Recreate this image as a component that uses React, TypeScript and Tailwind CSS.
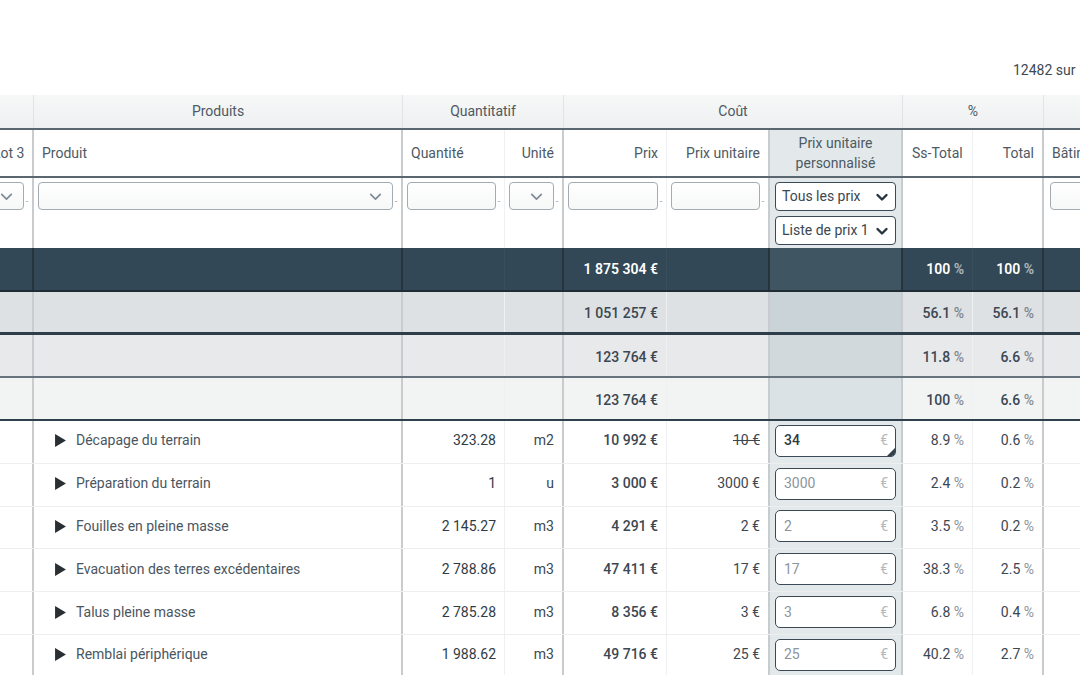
import React from 'react';

const GRID = 'grid grid-cols-[49px_369px_102px_59px_103px_103px_133px_70px_71px_140px]';

// right border per column: group edges are gray, inner ones faint
const vb = [
  'border-r-2 border-r-[#c8ccce]',
  'border-r-2 border-r-[#c8ccce]',
  'border-r border-r-[#eef0f1]',
  'border-r-2 border-r-[#c8ccce]',
  'border-r border-r-[#eef0f1]',
  'border-r-2 border-r-[#c8ccce]',
  'border-r-2 border-r-[#c8ccce]',
  'border-r border-r-[#eef0f1]',
  'border-r-2 border-r-[#c8ccce]',
  '',
];

const vbDark = [
  'border-r-2 border-r-[#26343e]',
  'border-r-2 border-r-[#26343e]',
  'border-r border-r-[#3a4f5c]',
  'border-r-2 border-r-[#26343e]',
  'border-r border-r-[#3a4f5c]',
  'border-r-2 border-r-[#26343e]',
  'border-r-2 border-r-[#26343e]',
  'border-r border-r-[#3a4f5c]',
  'border-r-2 border-r-[#26343e]',
  '',
];

function Chevron({ className }: { className?: string }) {
  return (
    <svg viewBox="0 0 16 16" className={className} fill="none" stroke="currentColor" strokeLinecap="round" strokeLinejoin="round">
      <path d="M3.5 6l4.5 4.5L12.5 6" />
    </svg>
  );
}

function Dots() {
  return <span className="text-[#7a858d] text-[9px] leading-none tracking-[-1px] self-center pt-[6px]">..</span>;
}

function FilterInput({ select }: { select?: boolean }) {
  return (
    <div className="flex items-start gap-[1px] px-[4px] pt-[4px]">
      <div className="flex-1 h-[28px] rounded-[4px] border border-[#a3acb2] bg-gradient-to-b from-white to-[#f6f7f7] flex items-center justify-end pr-[8px]">
        {select && <Chevron className="w-[17px] h-[17px] text-[#7f8a92] stroke-[1.6]" />}
      </div>
      <Dots />
    </div>
  );
}

function Pct({ v, className }: { v: string; className?: string }) {
  return (
    <span className={className}>
      {v}
      <span className="opacity-60"> %</span>
    </span>
  );
}

type Sum = { prix: string; ss: string; tot: string; bg: string; custom: string; border: string; text: string };

const sums: Sum[] = [
  { prix: '1 051 257 €', ss: '56.1', tot: '56.1', bg: 'bg-[#dde1e4]', custom: 'bg-[#c9d3d8]', border: 'border-b-[3px] border-b-[#2d3e4a]', text: 'font-medium' },
  { prix: '123 764 €', ss: '11.8', tot: '6.6', bg: 'bg-[#e7e9eb]', custom: 'bg-[#d1d9dd]', border: 'border-b-2 border-b-[#66737c]', text: 'font-medium' },
  { prix: '123 764 €', ss: '100', tot: '6.6', bg: 'bg-[#f2f4f4]', custom: 'bg-[#dbe2e5]', border: 'border-b-2 border-b-[#2f404c]', text: 'font-medium' },
];

const items = [
  { name: 'Décapage du terrain', q: '323.28', u: 'm2', prix: '10 992 €', pu: '10 €', custom: '34', ss: '8.9', tot: '0.6', active: true },
  { name: 'Préparation du terrain', q: '1', u: 'u', prix: '3 000 €', pu: '3000 €', custom: '3000', ss: '2.4', tot: '0.2' },
  { name: 'Fouilles en pleine masse', q: '2 145.27', u: 'm3', prix: '4 291 €', pu: '2 €', custom: '2', ss: '3.5', tot: '0.2' },
  { name: 'Evacuation des terres excédentaires', q: '2 788.86', u: 'm3', prix: '47 411 €', pu: '17 €', custom: '17', ss: '38.3', tot: '2.5' },
  { name: 'Talus pleine masse', q: '2 785.28', u: 'm3', prix: '8 356 €', pu: '3 €', custom: '3', ss: '6.8', tot: '0.4' },
  { name: 'Remblai périphérique', q: '1 988.62', u: 'm3', prix: '49 716 €', pu: '25 €', custom: '25', ss: '40.2', tot: '2.7' },
];

export default function App() {
  return (
    <div className="w-[1080px] h-[675px] overflow-hidden bg-white text-[14px] text-[#3b4752] whitespace-nowrap font-['Roboto','Liberation_Sans',sans-serif]">
      {/* toolbar */}
      <div className="h-[95px] flex items-end pb-[14px] pl-[1013px] text-[#3d4852]">
        12482 sur 12482 lignes
      </div>

      <div className="-ml-[15px] w-[1230px]">
        {/* group header */}
        <div className={`${GRID} h-[35px] bg-gradient-to-b from-[#f6f7f7] to-[#eff0f1] border-b-2 border-b-[#5b6770] text-[#4d5963]`}>
          <div className="border-r border-r-[#e1e4e6]" />
          <div className="flex items-center justify-center border-r border-r-[#e1e4e6]">Produits</div>
          <div className="col-span-2 flex items-center justify-center border-r border-r-[#e1e4e6]">Quantitatif</div>
          <div className="col-span-3 flex items-center justify-center border-r border-r-[#e1e4e6]">Coût</div>
          <div className="col-span-2 flex items-center justify-center border-r border-r-[#e1e4e6]">%</div>
          <div />
        </div>

        {/* column header */}
        <div className={`${GRID} h-[48px] border-b-2 border-b-[#5b6770] text-[#4d5963]`}>
          <div className={`${vb[0]} flex items-center pl-[8px]`}>Lot 3</div>
          <div className={`${vb[1]} flex items-center pl-[8px]`}>Produit</div>
          <div className={`${vb[2]} flex items-center pl-[8px]`}>Quantité</div>
          <div className={`${vb[3]} flex items-center justify-end pr-[8px]`}>Unité</div>
          <div className={`${vb[4]} flex items-center justify-end pr-[8px]`}>Prix</div>
          <div className={`${vb[5]} flex items-center justify-end pr-[8px]`}>Prix unitaire</div>
          <div className={`${vb[6]} bg-[#e3e9eb] flex items-center justify-center text-center leading-[20px]`}>
            Prix unitaire
            <br />
            personnalisé
          </div>
          <div className={`${vb[7]} flex items-center pl-[9px]`}>Ss-Total</div>
          <div className={`${vb[8]} flex items-center justify-end pr-[8px]`}>Total</div>
          <div className="flex items-center pl-[8px]">Bâtiment</div>
        </div>

        {/* filters */}
        <div className={`${GRID} h-[70px]`}>
          <div className={vb[0]}><FilterInput select /></div>
          <div className={vb[1]}><FilterInput select /></div>
          <div className={vb[2]}><FilterInput /></div>
          <div className={vb[3]}><FilterInput select /></div>
          <div className={vb[4]}><FilterInput /></div>
          <div className={vb[5]}><FilterInput /></div>
          <div className={`${vb[6]} bg-[#e3e9eb] flex flex-col gap-[5px] px-[5px] pt-[4px]`}>
            {['Tous les prix', 'Liste de prix 1'].map((t) => (
              <div key={t} className="h-[29px] rounded-[4px] border border-[#3b4a56] bg-white flex items-center justify-between pl-[6px] pr-[5px] text-[#3b4752]">
                <span>{t}</span>
                <Chevron className="w-[16px] h-[16px] text-[#26343e] stroke-[2.4]" />
              </div>
            ))}
          </div>
          <div className={vb[7]} />
          <div className={vb[8]} />
          <div className="px-[6px] pt-[4px]">
            <div className="h-[28px] rounded-[4px] border border-[#a3acb2] bg-gradient-to-b from-white to-[#f6f7f7]" />
          </div>
        </div>

        {/* grand total */}
        <div className={`${GRID} h-[44px] bg-[#334856] border-b-2 border-b-[#1f2c35] text-white font-semibold`}>
          <div className={vbDark[0]} />
          <div className={vbDark[1]} />
          <div className={vbDark[2]} />
          <div className={vbDark[3]} />
          <div className={`${vbDark[4]} flex items-center justify-end pr-[8px]`}>1 875 304 €</div>
          <div className={vbDark[5]} />
          <div className={`${vbDark[6]} bg-[#3f5562]`} />
          <div className={`${vbDark[7]} flex items-center justify-end pr-[8px]`}><Pct v="100" /></div>
          <div className={`${vbDark[8]} flex items-center justify-end pr-[8px]`}><Pct v="100" /></div>
          <div />
        </div>

        {/* subtotals */}
        {sums.map((s, i) => (
          <div key={i} className={`${GRID} h-[43px] ${s.bg} ${s.border} ${s.text}`}>
            <div className={vb[0]} />
            <div className={vb[1]} />
            <div className={vb[2]} />
            <div className={vb[3]} />
            <div className={`${vb[4]} flex items-center justify-end pr-[8px] pt-[3px]`}>{s.prix}</div>
            <div className={vb[5]} />
            <div className={`${vb[6]} ${s.custom}`} />
            <div className={`${vb[7]} flex items-center justify-end pr-[8px] pt-[3px]`}><Pct v={s.ss} /></div>
            <div className={`${vb[8]} flex items-center justify-end pr-[8px] pt-[3px]`}><Pct v={s.tot} /></div>
            <div />
          </div>
        ))}

        {/* items */}
        {items.map((r) => (
          <div key={r.name} className={`${GRID} h-[42.8px] border-b border-b-[#eceeef]`}>
            <div className={vb[0]} />
            <div className={`${vb[1]} flex items-center pl-[21px] pb-[2px] gap-[10px] text-[#4a5661]`}>
              <svg viewBox="0 0 10 12" className="w-[11px] h-[13px]">
                <path d="M0 0L10 6L0 12Z" fill="#2a2f33" />
              </svg>
              <span>{r.name}</span>
            </div>
            <div className={`${vb[2]} flex items-center justify-end pr-[8px] pb-[2px] text-[#2f3b45]`}>{r.q}</div>
            <div className={`${vb[3]} flex items-center justify-end pr-[8px] pb-[2px]`}>{r.u}</div>
            <div className={`${vb[4]} flex items-center justify-end pr-[8px] pb-[2px] font-medium`}>{r.prix}</div>
            <div className={`${vb[5]} flex items-center justify-end pr-[8px] pb-[2px]`}>
              <span className={r.active ? 'line-through' : ''}>{r.pu}</span>
            </div>
            <div className={`${vb[6]} bg-[#e3e9eb] flex items-center px-[5px] pb-[2px]`}>
              <div className="relative w-full h-[32px] rounded-[5px] border border-[#3b4a56] bg-white flex items-center justify-between pl-[8px] pr-[7px] overflow-hidden">
                <span className={r.active ? 'text-[#2f3b45] font-medium' : 'text-[#8d959b]'}>{r.custom}</span>
                <span className="text-[#b3b9bd]">€</span>
                {r.active && (
                  <svg viewBox="0 0 8 8" className="absolute right-0 bottom-0 w-[8px] h-[8px]">
                    <path d="M8 0L8 8L0 8Z" fill="#2f3f4b" />
                  </svg>
                )}
              </div>
            </div>
            <div className={`${vb[7]} flex items-center justify-end pr-[8px] pb-[2px]`}><Pct v={r.ss} /></div>
            <div className={`${vb[8]} flex items-center justify-end pr-[8px] pb-[2px]`}><Pct v={r.tot} /></div>
            <div />
          </div>
        ))}
      </div>
    </div>
  );
}
